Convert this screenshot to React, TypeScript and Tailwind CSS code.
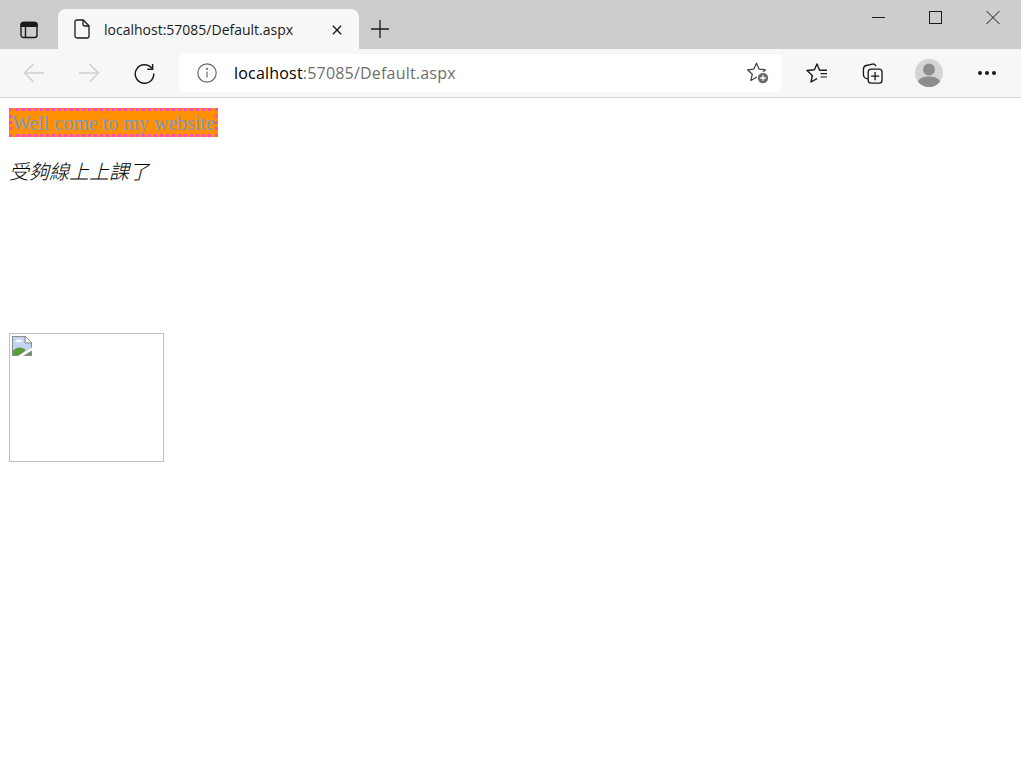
const ui = { fontFamily: '"Open Sans", "Noto Sans", sans-serif' };

function TabsIcon() {
  return (
    <svg width="18" height="18" viewBox="0 0 18 18" fill="none" stroke="#1a1a1a" strokeWidth="1.4">
      <rect x="1" y="1.5" width="16" height="15" rx="2.5" />
      <path d="M1.2 5.2H16.8V3.5a2 2 0 0 0-2-2H3.2a2 2 0 0 0-2 2Z" fill="#1a1a1a" />
      <path d="M5.5 5.5V16" />
    </svg>
  );
}

function PageIcon() {
  return (
    <svg width="16" height="20" viewBox="0 0 16 20" fill="none" stroke="#1a1a1a" strokeWidth="1.3">
      <path d="M3 1h6.2L15 6.8V17a2 2 0 0 1-2 2H3a2 2 0 0 1-2-2V3a2 2 0 0 1 2-2Z" />
      <path d="M9 1v4.2a1.8 1.8 0 0 0 1.8 1.8H15" />
    </svg>
  );
}

function Arrow({ flip }: { flip?: boolean }) {
  return (
    <svg width="22" height="20" viewBox="0 0 22 20" fill="none" stroke="#cfcfcf" strokeWidth="1.4" className={flip ? "-scale-x-100" : ""}>
      <path d="M1.5 10H21M10.5 1L1.5 10l9 9" />
    </svg>
  );
}

function Reload() {
  return (
    <svg width="21" height="21" viewBox="0 0 22 22" fill="none" stroke="#1a1a1a" strokeWidth="1.5">
      <path d="M18.6 5.5A9.7 9.7 0 1 0 20.7 11" />
      <path d="M19.5 1v5.6h-5.6" />
    </svg>
  );
}

function InfoIcon() {
  return (
    <svg width="20" height="20" viewBox="0 0 20 20" fill="none" stroke="#6b6b6b" strokeWidth="1.2">
      <circle cx="10" cy="10" r="9.2" />
      <path d="M10 8.6v6" />
      <circle cx="10" cy="5.9" r="0.5" fill="#6b6b6b" />
    </svg>
  );
}

function StarAdd() {
  return (
    <svg width="22" height="22" viewBox="0 0 22 22" fill="none">
      <path
        d="M9.5 1.2l2.6 5.9 6.4.7-4.8 4.4 1.4 6.3-5.6-3.2-5.6 3.2 1.4-6.3L.5 7.8l6.4-.7Z"
        stroke="#3c3c3c"
        strokeWidth="1.2"
        strokeLinejoin="round"
      />
      <circle cx="16" cy="16" r="6.2" fill="#ffffff" />
      <circle cx="16" cy="16" r="5.2" fill="#6b6b6b" />
      <path d="M16 13.2v5.6M13.2 16h5.6" stroke="#fff" strokeWidth="1.3" />
    </svg>
  );
}

function Favorites() {
  return (
    <svg width="22" height="20" viewBox="0 0 22 20" fill="none" stroke="#1a1a1a" strokeWidth="1.4" strokeLinejoin="round">
      <path d="M21 7.2h-7.4L11 1 8.4 6.8 1 7.5l5.3 5L5 19l6-3.4" />
      <path d="M14.5 10.6H21M14.5 14H21" strokeWidth="1.2" />
    </svg>
  );
}

function Collections() {
  return (
    <svg width="21" height="21" viewBox="0 0 22 22" fill="none" stroke="#1a1a1a" strokeWidth="1.4">
      <path d="M6 16.5A4.5 4.5 0 0 1 1.5 12V6.5a4 4 0 0 1 3-3.9L11 1.1a3 3 0 0 1 3.6 2.4" />
      <rect x="6.5" y="6.5" width="14.5" height="14.5" rx="3" fill="#f7f7f7" />
      <path d="M13.7 9.5v8.5M9.5 13.7H18" />
    </svg>
  );
}

function Avatar() {
  return (
    <svg width="28" height="28" viewBox="0 0 28 28">
      <circle cx="14" cy="14" r="14" fill="#d6d4d2" />
      <circle cx="14" cy="10.5" r="6" fill="#8d8d8d" />
      <path d="M2.8 22.5C5 18.5 9 17.5 14 17.5s9 1 11.2 5A14 14 0 0 1 14 28 14 14 0 0 1 2.8 22.5Z" fill="#8d8d8d" />
    </svg>
  );
}

function BrokenImage() {
  return (
    <svg width="20" height="20" viewBox="0 0 20 20">
      <path d="M0 0h13l7 7v13H0Z" fill="#c3d3f2" />
      <path d="M3 6c1-3 6-4 8 0Z" fill="#f4f7fd" />
      <path d="M1 19v-4c3-4 8-5 13-1l-6 5Z" fill="#5a9e3c" />
      <path d="M12 19l7-5v5Z" fill="#6f8f68" />
      <path d="M0 0h13l7 7v13H0Z M1 1v18h18V7.5L12.5 1Z" fill="#8d8d8d" fillRule="evenodd" />
      <path d="M6 20L20 11.5V14.5L11 20Z" fill="#ffffff" />
      <path d="M13.5 0v6.5H20V0Z" fill="#ffffff" />
      <path d="M13 0v7h7M13 0l7 7" fill="none" stroke="#8d8d8d" />
    </svg>
  );
}

export default function App() {
  return (
    <div className="min-h-[759px] bg-white">
      <header style={ui}>
        <div className="flex h-[49px] bg-[#cdcdcd]">
          <div className="flex w-[58px] items-center pl-[20px] pt-[10px]">
            <TabsIcon />
          </div>
          <div className="mt-[9px] flex h-[40px] w-[301px] items-center rounded-t-[8px] bg-[#f7f7f7] pl-[16px]">
            <PageIcon />
            <span className="ml-[14px] w-[214px] text-[14px] text-[#1a1a1a]">localhost:57085/Default.aspx</span>
            <svg width="10" height="10" viewBox="0 0 12 12" stroke="#1a1a1a" strokeWidth="1.6" className="ml-[14px] mt-[2px]">
              <path d="M1 1l10 10M11 1L1 11" />
            </svg>
          </div>
          <div className="ml-[12px] flex items-center pt-[9px]">
            <svg width="18" height="18" viewBox="0 0 18 18" stroke="#1a1a1a" strokeWidth="1.3">
              <path d="M9 0v18M0 9h18" />
            </svg>
          </div>
          <div className="ml-auto flex items-start pt-[11px]">
            <svg width="14" height="14" viewBox="0 0 14 14" stroke="#1a1a1a" strokeWidth="1" className="mr-[43px]">
              <path d="M0 6.5h13" />
            </svg>
            <svg width="14" height="14" viewBox="0 0 14 14" fill="none" stroke="#1a1a1a" strokeWidth="1" className="mr-[43px]">
              <rect x="0.5" y="0.5" width="12" height="12" />
            </svg>
            <svg width="14" height="14" viewBox="0 0 14 14" stroke="#1a1a1a" strokeWidth="1" className="mr-[21px]">
              <path d="M0.5 0l13 13M13.5 0L0.5 13" />
            </svg>
          </div>
        </div>
        <div className="flex h-[49px] items-center border-b border-[#d2d2d2] bg-[#f7f7f7]">
          <div className="ml-[23px] flex">
            <Arrow />
          </div>
          <div className="ml-[33px] flex">
            <Arrow flip />
          </div>
          <div className="ml-[34px] flex">
            <Reload />
          </div>
          <div className="ml-[24px] flex h-[38px] w-[603px] items-center rounded-[5px] bg-white pl-[18px]">
            <InfoIcon />
            <span className="ml-[17px] text-[16px] tracking-[0.2px]">
              <span className="text-black">localhost</span>
              <span className="text-[#6f6f6f]">:57085/Default.aspx</span>
            </span>
            <div className="ml-auto mr-[13px] flex">
              <StarAdd />
            </div>
          </div>
          <div className="ml-[24px] flex">
            <Favorites />
          </div>
          <div className="ml-[34px] flex">
            <Collections />
          </div>
          <div className="ml-[32px] flex">
            <Avatar />
          </div>
          <div className="ml-[35px] flex gap-[3px]">
            <span className="h-[4px] w-[4px] rounded-full bg-[#1a1a1a]" />
            <span className="h-[4px] w-[4px] rounded-full bg-[#1a1a1a]" />
            <span className="h-[4px] w-[4px] rounded-full bg-[#1a1a1a]" />
          </div>
        </div>
      </header>
      <main className="pl-[9px] pt-[10px]">
        <div
          className="inline-block border-[3px] border-dotted border-[#ff4db8] bg-[#ff9000] pt-px text-[20px] leading-[22px] text-[#7c9bc9]"
          style={{ fontFamily: '"Liberation Serif", serif' }}
        >
          Well come to my website
        </div>
        <p
          className="mt-[20px] text-[20px] font-light leading-[28px] text-black italic"
          style={{ fontFamily: '"Noto Sans CJK TC", sans-serif' }}
        >
          受夠線上上課了
        </p>
        <div className="mt-[148px] h-[129px] w-[155px] border border-[#c0c0c0] pl-[2px] pt-[2px]">
          <BrokenImage />
        </div>
      </main>
    </div>
  );
}
